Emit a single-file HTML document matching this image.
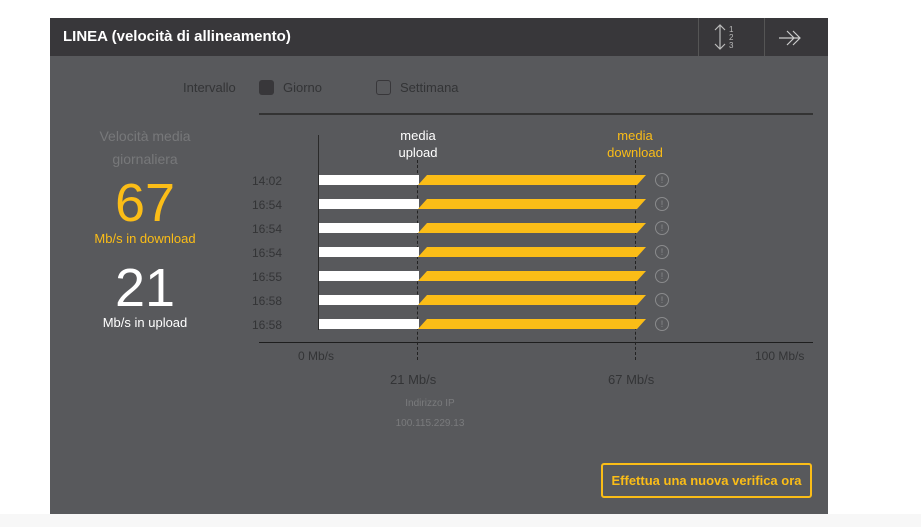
<!DOCTYPE html>
<html><head><meta charset="utf-8"><style>
*{margin:0;padding:0;box-sizing:border-box}
body{width:921px;height:527px;background:#fff;position:relative;overflow:hidden;font-family:"Liberation Sans",sans-serif}
.a{position:absolute;white-space:nowrap}
#p{position:absolute;left:50px;top:18px;width:778px;height:496px;background:#58595c}
#h{position:absolute;left:50px;top:18px;width:778px;height:38px;background:#38373a}
.r{position:absolute;height:10px}
.w{left:319px;width:100px;background:#fff}
.y{left:418px;width:228px;background:#fbbd17;clip-path:polygon(9px 0,100% 0,calc(100% - 9px) 100%,0 100%)}
.t{left:252px;width:44px;color:#333436;font-size:12px}
.c{left:655px;width:14px;height:14px;border:1px solid #8a8b8d;border-radius:50%;color:#8a8b8d;font-size:9px;text-align:center;line-height:12px}
</style></head><body>
<div style="position:absolute;left:0;top:514px;width:921px;height:13px;background:#f7f7f7"></div>
<div id="p"></div><div id="h"></div>
<div class="a" style="left:63px;top:28px;color:#fff;font-size:15px;font-weight:bold">LINEA (velocità di allineamento)</div>
<div class="a" style="left:698px;top:18px;width:1px;height:38px;background:#555"></div>
<div class="a" style="left:764px;top:18px;width:1px;height:38px;background:#555"></div>
<svg class="a" style="left:712px;top:22px" width="30" height="30"><path d="M8 3V27M3 8L8 3L13 8M3 22L8 27L13 22" stroke="#bbb" fill="none" stroke-width="1.2"/><text x="17" y="10" font-size="8" fill="#bbb">1</text><text x="17" y="18" font-size="8" fill="#bbb">2</text><text x="17" y="26" font-size="8" fill="#bbb">3</text></svg>
<svg class="a" style="left:778px;top:28px" width="26" height="20"><path d="M1 10H22M9 3L16 10L9 17M15 3L22 10L15 17" stroke="#ccc" fill="none" stroke-width="1.2"/></svg>
<div class="a" style="left:183px;top:80px;color:#333436;font-size:13px">Intervallo</div>
<div class="a" style="left:259px;top:80px;width:15px;height:15px;background:#38373a;border-radius:3px"></div>
<div class="a" style="left:283px;top:80px;color:#333436;font-size:13px">Giorno</div>
<div class="a" style="left:376px;top:80px;width:15px;height:15px;border:1px solid #38373a;border-radius:3px"></div>
<div class="a" style="left:400px;top:80px;color:#333436;font-size:13px">Settimana</div>
<div class="a" style="left:259px;top:113px;width:554px;height:2px;background:#333"></div>
<div class="a" style="left:60px;top:125px;width:170px;text-align:center;color:#77787a;font-size:14px;line-height:23px;white-space:normal">Velocità media<br>giornaliera</div>
<div class="a" style="left:60px;top:172px;width:170px;text-align:center;color:#fbbd17;font-size:54px">67</div>
<div class="a" style="left:60px;top:231px;width:170px;text-align:center;color:#fbbd17;font-size:13px">Mb/s in download</div>
<div class="a" style="left:60px;top:257px;width:170px;text-align:center;color:#fff;font-size:54px">21</div>
<div class="a" style="left:60px;top:315px;width:170px;text-align:center;color:#fff;font-size:13px">Mb/s in upload</div>
<div class="a" style="left:318px;top:135px;width:1px;height:195px;background:#2a2a2a"></div>
<div class="a" style="left:259px;top:342px;width:554px;height:1px;background:#1e1e1e"></div>
<div class="a" style="left:417px;top:160px;height:200px;border-left:1px dashed #222"></div>
<div class="a" style="left:635px;top:160px;height:200px;border-left:1px dashed #222"></div>
<div class="a" style="left:378px;top:127px;width:80px;text-align:center;color:#fff;font-size:13px;line-height:17px">media<br>upload</div>
<div class="a" style="left:595px;top:127px;width:80px;text-align:center;color:#fbbd17;font-size:13px;line-height:17px">media<br>download</div>
<div class="r t" style="top:174px">14:02</div><div class="r w" style="top:175px"></div><div class="r y" style="top:175px"></div><div class="a c" style="top:173px">!</div>
<div class="r t" style="top:198px">16:54</div><div class="r w" style="top:199px"></div><div class="r y" style="top:199px"></div><div class="a c" style="top:197px">!</div>
<div class="r t" style="top:222px">16:54</div><div class="r w" style="top:223px"></div><div class="r y" style="top:223px"></div><div class="a c" style="top:221px">!</div>
<div class="r t" style="top:246px">16:54</div><div class="r w" style="top:247px"></div><div class="r y" style="top:247px"></div><div class="a c" style="top:245px">!</div>
<div class="r t" style="top:270px">16:55</div><div class="r w" style="top:271px"></div><div class="r y" style="top:271px"></div><div class="a c" style="top:269px">!</div>
<div class="r t" style="top:294px">16:58</div><div class="r w" style="top:295px"></div><div class="r y" style="top:295px"></div><div class="a c" style="top:293px">!</div>
<div class="r t" style="top:318px">16:58</div><div class="r w" style="top:319px"></div><div class="r y" style="top:319px"></div><div class="a c" style="top:317px">!</div>
<div class="a" style="left:298px;top:349px;color:#333436;font-size:12px">0 Mb/s</div>
<div class="a" style="left:755px;top:349px;color:#333436;font-size:12px">100 Mb/s</div>
<div class="a" style="left:390px;top:372px;color:#333436;font-size:13px">21 Mb/s</div>
<div class="a" style="left:608px;top:372px;color:#333436;font-size:13px">67 Mb/s</div>
<div class="a" style="left:380px;top:398px;width:100px;text-align:center;color:#7a7b7d;font-size:10px">Indirizzo IP</div>
<div class="a" style="left:380px;top:418px;width:100px;text-align:center;color:#7a7b7d;font-size:10px">100.115.229.13</div>
<div class="a" style="left:601px;top:463px;width:211px;height:35px;border:2px solid #fbbd17;border-radius:3px;color:#fbbd17;font-size:13px;font-weight:bold;text-align:center;line-height:31px">Effettua una nuova verifica ora</div>
</body></html>
